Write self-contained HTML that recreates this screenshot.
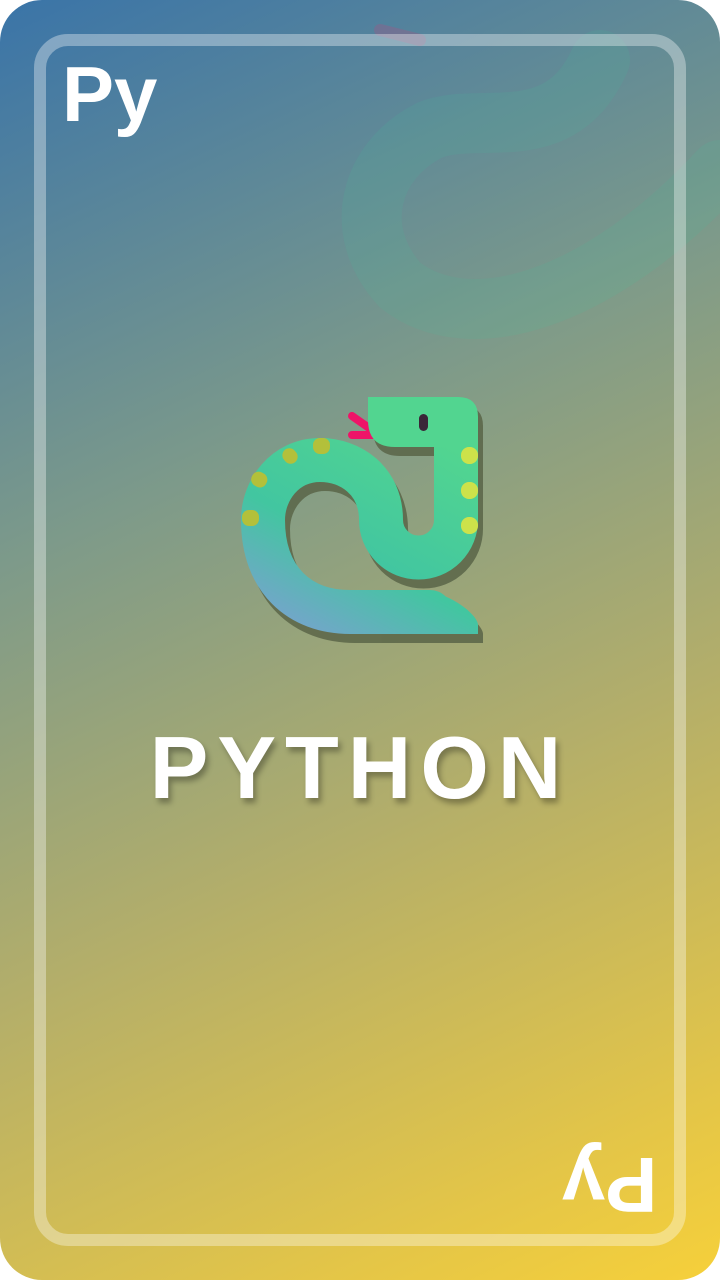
<!DOCTYPE html>
<html><head><meta charset="utf-8"><style>
html,body{margin:0;padding:0;background:#fff;}
.card{position:absolute;left:0;top:0;width:720px;height:1280px;border-radius:42px;overflow:hidden;
background:linear-gradient(155deg,#3a74a8 0%,#7d9a8a 35%,#b3ae6a 62%,#e3c548 88%,#f6d03a 100%);}
.frame{position:absolute;left:34px;top:34px;width:628px;height:1188px;border:12px solid rgba(255,255,255,0.35);border-radius:34px;}
.py{position:absolute;font-family:"Liberation Sans",sans-serif;font-weight:bold;font-size:78px;color:#fff;line-height:1;}
.title{position:absolute;left:0;width:720px;top:717px;text-align:center;font-family:"Liberation Sans",sans-serif;font-weight:bold;font-size:88px;letter-spacing:9px;color:#fff;text-shadow:3px 5px 6px rgba(0,0,0,0.3);}
</style></head><body>
<div class="card">
<svg width="720" height="1280" style="position:absolute;left:0;top:0" viewBox="0 0 720 1280">
<defs>
<linearGradient id="g" gradientUnits="userSpaceOnUse" x1="420" y1="430" x2="300" y2="650"><stop offset="0" stop-color="#52d590"/><stop offset="0.55" stop-color="#42c6a0"/><stop offset="1" stop-color="#7d9fd2"/></linearGradient>
</defs>
<g opacity="0.12" fill="none" stroke="#3fc6a0" stroke-width="60">
<path d="M600,60 C560,150 480,110 430,130 C370,160 350,230 400,285 C470,340 600,300 720,170" stroke-linecap="round"/>
</g>
<path d="M380,30 L420,40" stroke="#b05080" stroke-width="12" opacity="0.3" stroke-linecap="round"/>
<g transform="translate(5,9)" fill="#5a6548" opacity="0.85">
<path d="M456,420 L456,520 A37.5,37.5 0 0 1 381,520 C381,480 350,460 320,460 C285,460 263,490 263,520 C263,580 300,612 350,612 L430,612" fill="none" stroke="#5a6548" stroke-width="44" stroke-linecap="round"/>
<path d="M420,590 C450,592 478,615 478,625 L478,634 L420,634Z"/>
<path d="M368,397 L458,397 Q478,397 478,417 L478,447 L395,447 Q368,447 368,420Z"/>
</g>
<path d="M352,416 L372,430 M352,435 L378,435" stroke="#ee1468" stroke-width="8" stroke-linecap="round"/>
<path d="M456,420 L456,520 A37.5,37.5 0 0 1 381,520 C381,480 350,460 320,460 C285,460 263,490 263,520 C263,580 300,612 350,612 L430,612" fill="none" stroke="url(#g)" stroke-width="44" stroke-linecap="round"/>
<path d="M420,590 C450,592 478,615 478,625 L478,634 L420,634Z" fill="url(#g)"/>
<path d="M368,397 L458,397 Q478,397 478,417 L478,447 L395,447 Q368,447 368,420Z" fill="#52d590"/>
<rect x="419" y="414" width="9" height="17" rx="4.5" fill="#3a2638"/>
<g fill="#cde24a">
<rect x="461" y="447" width="17" height="17" rx="8"/><rect x="461" y="482" width="17" height="17" rx="8"/><rect x="461" y="517" width="17" height="17" rx="8"/>
</g>
<g fill="#b3c03a">
<rect x="313" y="438" width="17" height="16" rx="7"/>
<rect x="283" y="448" width="14" height="16" rx="7" transform="rotate(-40 290 456)"/>
<rect x="252" y="472" width="15" height="16" rx="7" transform="rotate(-60 259 480)"/>
<rect x="242" y="510" width="17" height="16" rx="7"/>
</g>
</svg>
<div class="frame"></div>
<div class="py" style="left:62px;top:55px;">Py</div>
<div class="py" style="left:562px;top:1146px;transform:rotate(180deg);">Py</div>
<div class="title">PYTHON</div>
</div>
</body></html>
